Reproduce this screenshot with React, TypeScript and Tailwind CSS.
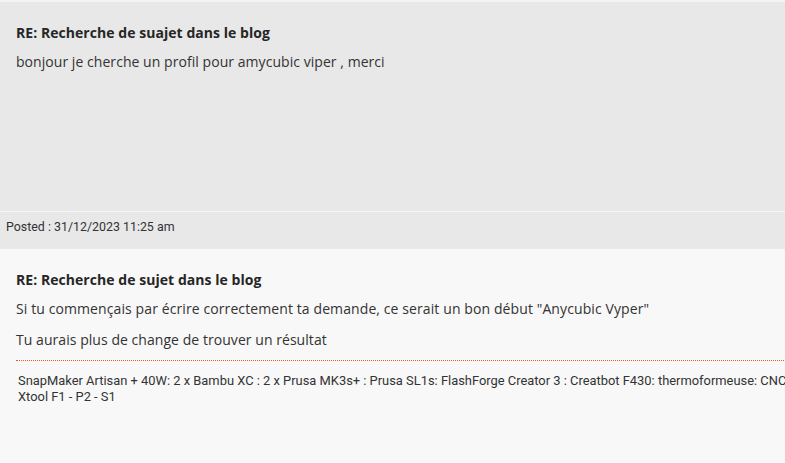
import React from "react";

export default function App() {
  const body = "font-['Open_Sans',sans-serif]";
  return (
    <div className="w-[785px] h-[463px] overflow-hidden bg-[#f8f8f8] text-[#333333]">
      <div className="w-[1000px]">
        <div className="h-[2px] bg-[#f3f3f3]" />
        <div className={`h-[209px] bg-[#e8e8e8] px-4 pt-[21px] ${body}`}>
          <div className="text-[14px] leading-[20px] font-bold text-[#262626] tracking-[0.05px]">RE: Recherche de suajet dans le blog</div>
          <p className="mt-[9px] text-[14px] leading-[20px] tracking-[0.05px]">bonjour je cherche un profil pour amycubic viper , merci</p>
        </div>
        <div className="h-px bg-[#f5f5f5]" />
        <div className="h-[37px] bg-[#e8e8e8] pt-[7px] px-[6px] text-[12.4px] leading-[16px] font-['Roboto',sans-serif] text-[#333333]">
          Posted : 31/12/2023 11:25 am
        </div>
        <div className={`bg-[#f8f8f8] px-4 pt-[21px] ${body}`}>
          <div className="text-[14px] leading-[20px] font-bold text-[#262626] tracking-[0.05px]">RE: Recherche de sujet dans le blog</div>
          <p className="mt-[9px] text-[14px] leading-[20px] tracking-[0.1px]">Si tu commençais par écrire correctement ta demande, ce serait un bon début "Anycubic Vyper"</p>
          <p className="mt-[11px] text-[14px] leading-[20px] tracking-[0.05px]">Tu aurais plus de change de trouver un résultat</p>
          <div className="mt-[10px] border-t border-dotted border-[#f05a1a]" />
          <div className="mt-[12px] px-[2px] text-[12.9px] leading-[16px] font-['Roboto',sans-serif] text-[#333333]">
            SnapMaker Artisan + 40W: 2 x Bambu XC : 2 x Prusa MK3s+ : Prusa SL1s: FlashForge Creator 3 : Creatbot F430: thermoformeuse: CNC
            <br />
            Xtool F1 - P2 - S1
          </div>
        </div>
      </div>
    </div>
  );
}
